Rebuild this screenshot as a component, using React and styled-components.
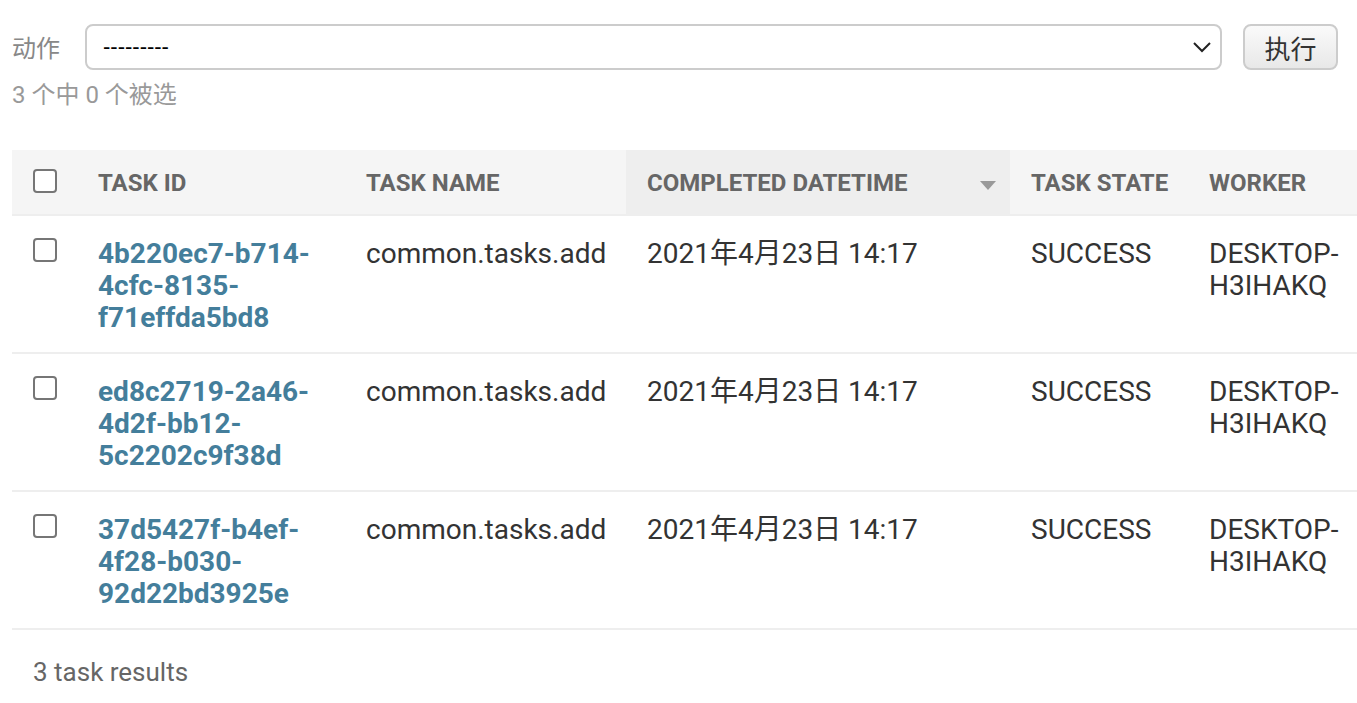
import React from "react";
import styled, { createGlobalStyle } from "styled-components";

const GlobalStyle = createGlobalStyle`
  html, body {
    margin: 0;
    padding: 0;
    background: #fff;
    overflow: hidden;
  }
  body {
    font-family: Roboto, "Noto Sans CJK SC", sans-serif;
    color: #333;
  }
`;

const rows = [
  { id: ["4b220ec7-b714-", "4cfc-8135-", "f71effda5bd8"] },
  { id: ["ed8c2719-2a46-", "4d2f-bb12-", "5c2202c9f38d"] },
  { id: ["37d5427f-b4ef-", "4f28-b030-", "92d22bd3925e"] },
];

const App = () => {
  return (
    <Page>
      <GlobalStyle />
      <Actions>
        <ActionLabel>动作</ActionLabel>
        <SelectBox>
          <span>---------</span>
          <svg width="20" height="12" viewBox="0 0 20 12">
            <path d="M2 2 L10 10 L18 2" fill="none" stroke="#222" strokeWidth="2" />
          </svg>
        </SelectBox>
        <GoButton>执行</GoButton>
      </Actions>
      <Counter>3 个中 0 个被选</Counter>

      <Table>
        <colgroup>
          <col style={{ width: 65 }} />
          <col style={{ width: 268 }} />
          <col style={{ width: 281 }} />
          <col style={{ width: 384 }} />
          <col style={{ width: 178 }} />
          <col style={{ width: 200 }} />
        </colgroup>
        <thead>
          <tr>
            <Th>
              <CheckBox $head />
            </Th>
            <Th>Task ID</Th>
            <Th>Task name</Th>
            <Th $sorted>
              <SortWrap>
                Completed datetime
                <SortArrow />
              </SortWrap>
            </Th>
            <Th>Task state</Th>
            <Th>Worker</Th>
          </tr>
        </thead>
        <tbody>
          {rows.map((r) => (
            <tr key={r.id[0]}>
              <Td>
                <CheckBox />
              </Td>
              <Td>
                <TaskLink href="#">
                  {r.id.map((part) => (
                    <span key={part}>
                      {part}
                      <br />
                    </span>
                  ))}
                </TaskLink>
              </Td>
              <Td>common.tasks.add</Td>
              <Td>2021年4月23日 14:17</Td>
              <Td>SUCCESS</Td>
              <Td>
                DESKTOP-
                <br />
                H3IHAKQ
              </Td>
            </tr>
          ))}
        </tbody>
      </Table>

      <Paginator>3 task results</Paginator>
    </Page>
  );
};

const Page = styled.div`
  padding: 24px 0 0 12px;
  width: 1400px;
`;

const Actions = styled.div`
  display: flex;
  align-items: center;
  height: 46px;
`;

const ActionLabel = styled.label`
  font-size: 24px;
  color: #888;
  width: 73px;
  flex-shrink: 0;
  margin-top: -2px;
`;

const SelectBox = styled.div`
  box-sizing: border-box;
  width: 1137px;
  height: 46px;
  border: 2px solid #ccc;
  border-radius: 8px;
  display: flex;
  align-items: center;
  justify-content: space-between;
  padding: 0 8px 0 16px;
  font-family: "Liberation Sans", Arial, sans-serif;
  font-size: 22px;
  color: #000;
  background: #fff;
`;

const GoButton = styled.button`
  box-sizing: border-box;
  margin-left: 21px;
  width: 95px;
  height: 46px;
  border: 2px solid #ccc;
  border-radius: 8px;
  background: linear-gradient(to bottom, #fafafa, #e8e8e8);
  font-family: "Noto Sans CJK SC", sans-serif;
  font-size: 26px;
  color: #333;
  padding: 0;
`;

const Counter = styled.div`
  margin-top: 10px;
  font-size: 24px;
  color: #999;
  line-height: 30px;
  font-family: Roboto, "Noto Sans CJK SC", sans-serif;
`;

const Table = styled.table`
  margin-top: 40px;
  border-collapse: collapse;
  table-layout: fixed;
  width: 1376px;
`;

const Th = styled.th`
  text-align: left;
  background: ${(p) => (p.$sorted ? "#eeeeee" : "#f5f5f5")};
  color: #666;
  font-size: 24px;
  font-weight: 700;
  text-transform: uppercase;
  line-height: 24px;
  height: 24px;
  padding: 21px 21px 19px;
  border-bottom: 2px solid #eee;
  vertical-align: middle;
  white-space: nowrap;
`;

const SortWrap = styled.div`
  display: flex;
  align-items: center;
  justify-content: space-between;
`;

const SortArrow = styled.span`
  width: 0;
  height: 0;
  border-left: 8px solid transparent;
  border-right: 8px solid transparent;
  border-top: 9px solid #999;
  margin-right: -7px;
  margin-top: 4px;
`;

const Td = styled.td`
  vertical-align: top;
  font-size: 28px;
  line-height: 32px;
  padding: 22px 21px 18px;
  border-bottom: 2px solid #eee;
  color: #333;
`;

const CheckBox = styled.span`
  display: block;
  box-sizing: border-box;
  width: 24px;
  height: 24px;
  border: 2px solid #767676;
  border-radius: 4px;
  background: #fff;
  margin-top: ${(p) => (p.$head ? "-5px" : "0")};
`;

const TaskLink = styled.a`
  color: #447e9b;
  font-weight: 700;
  text-decoration: none;
`;

const Paginator = styled.div`
  padding: 27px 21px;
  font-size: 26px;
  color: #666;
  line-height: 30px;
`;

export default App;
